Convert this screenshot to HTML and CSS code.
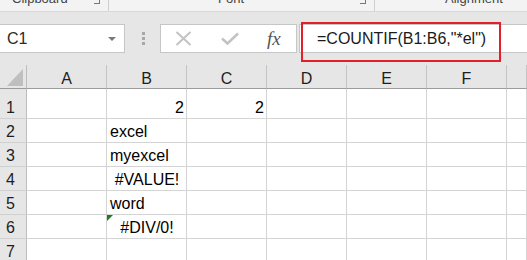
FILE: index.html
```html
<!DOCTYPE html>
<html lang="en">
<head>
    <meta charset="UTF-8">
    <title>COUNTIF</title>
    <link rel="stylesheet" href="styles.css">
</head>
<body>

    <!-- ribbon group labels, cut off at the top -->
    <div class="ribbon">
        <div class="group group-clip">
            <span class="label">Clipboard</span>
            <span class="launcher"></span>
        </div>
        <div class="group group-font">
            <span class="label">Font</span>
            <span class="launcher"></span>
        </div>
        <div class="group group-align">
            <span class="label">Alignment</span>
        </div>
    </div>

    <div class="formula-area">
        <div class="name-box">
            <span>C1</span>
            <span class="drop"></span>
        </div>
        <div class="dots"><i></i><i></i><i></i></div>
        <div class="buttons">
            <svg width="17" height="15" viewBox="0 0 17 15">
                <path d="M1.5 1 L15.5 14 M15.5 1 L1.5 14" stroke="#c3c3c3" stroke-width="2" fill="none"/>
            </svg>
            <svg width="18" height="13" viewBox="0 0 18 13">
                <path d="M1 6.5 L6.5 11.5 L17 1.5" stroke="#c3c3c3" stroke-width="2.6" fill="none"/>
            </svg>
            <span class="fx">fx</span>
        </div>
        <div class="formula">=COUNTIF(B1:B6,"*el")</div>
        <div class="highlight"></div>
    </div>

    <div class="sheet">
        <div class="corner"><span class="tri"></span></div>
        <div class="col-head">A</div>
        <div class="col-head">B</div>
        <div class="col-head">C</div>
        <div class="col-head">D</div>
        <div class="col-head">E</div>
        <div class="col-head">F</div>
        <div class="col-head"></div>

        <div class="row-head">1</div>
        <div class="cell"></div>
        <div class="cell num">2</div>
        <div class="cell num">2</div>
        <div class="cell"></div><div class="cell"></div><div class="cell"></div><div class="cell"></div>

        <div class="row-head">2</div>
        <div class="cell"></div>
        <div class="cell">excel</div>
        <div class="cell"></div><div class="cell"></div><div class="cell"></div><div class="cell"></div><div class="cell"></div>

        <div class="row-head">3</div>
        <div class="cell"></div>
        <div class="cell">myexcel</div>
        <div class="cell"></div><div class="cell"></div><div class="cell"></div><div class="cell"></div><div class="cell"></div>

        <div class="row-head">4</div>
        <div class="cell"></div>
        <div class="cell err">#VALUE!</div>
        <div class="cell"></div><div class="cell"></div><div class="cell"></div><div class="cell"></div><div class="cell"></div>

        <div class="row-head">5</div>
        <div class="cell"></div>
        <div class="cell">word</div>
        <div class="cell"></div><div class="cell"></div><div class="cell"></div><div class="cell"></div><div class="cell"></div>

        <div class="row-head">6</div>
        <div class="cell"></div>
        <div class="cell err flagged">#DIV/0!</div>
        <div class="cell"></div><div class="cell"></div><div class="cell"></div><div class="cell"></div><div class="cell"></div>

        <div class="row-head">7</div>
        <div class="cell"></div><div class="cell"></div><div class="cell"></div><div class="cell"></div><div class="cell"></div><div class="cell"></div><div class="cell"></div>
    </div>

</body>
</html>
```

FILE: styles.css
```css
body {
    margin: 0;
    width: 527px;
    height: 260px;
    overflow: hidden;
    background: #fff;
    font-family: 'Liberation Sans', Arial, sans-serif;
    color: #000;
}

/* ribbon */
.ribbon {
    display: flex;
    height: 11px;
    background: #f3f3f3;
    border-bottom: 1px solid #d8d8d8;
    overflow: hidden;
}

.group {
    position: relative;
    box-sizing: border-box;
    height: 11px;
    border-right: 1px solid #cfcfcf;
}

.group-clip {
    width: 109px;
    padding-left: 12px;
}

.group-font {
    width: 266px;
    padding-left: 109px;
}

.group-align {
    flex: 1;
    padding-left: 70px;
    border-right: none;
}

.label {
    display: block;
    font-size: 13px;
    line-height: 15px;
    margin-top: -9px;
    color: #444;
    white-space: nowrap;
}

.launcher {
    position: absolute;
    right: 8px;
    top: -2px;
    width: 5px;
    height: 5px;
    border-right: 1px solid #777;
    border-bottom: 1px solid #777;
}

/* formula bar */
.formula-area {
    position: relative;
    display: flex;
    align-items: center;
    height: 53px;
    background: #e6e6e6;
}

.name-box {
    display: flex;
    align-items: center;
    justify-content: space-between;
    box-sizing: border-box;
    width: 126px;
    height: 29px;
    margin-left: -1px;
    padding: 0 8px 0 7px;
    background: #fff;
    border: 1px solid #c6c6c6;
    font-size: 16px;
    color: #2b2b2b;
}

.drop {
    width: 0;
    height: 0;
    border-left: 4px solid transparent;
    border-right: 4px solid transparent;
    border-top: 4px solid #7a7a7a;
}

.dots {
    display: flex;
    flex-direction: column;
    gap: 2px;
    margin: 0 15px 0 17px;
}

.dots i {
    width: 3px;
    height: 3px;
    background: #a8a8a8;
}

.buttons {
    display: flex;
    align-items: center;
    box-sizing: border-box;
    width: 137px;
    height: 29px;
    padding-left: 14px;
    background: #fff;
    border: 1px solid #c6c6c6;
}

.buttons svg + svg {
    margin-left: 29px;
}

.fx {
    margin-left: 28px;
    font-family: 'Liberation Serif', serif;
    font-style: italic;
    font-size: 19px;
    color: #555;
}

.formula {
    flex: 1;
    box-sizing: border-box;
    height: 29px;
    margin-left: 2px;
    padding-left: 17px;
    line-height: 27px;
    background: #fff;
    border: 1px solid #c6c6c6;
    border-right: none;
    font-size: 16px;
    color: #1a1a1a;
    white-space: nowrap;
}

/* red annotation frame */
.highlight {
    position: absolute;
    left: 301px;
    top: 10px;
    width: 196px;
    height: 36px;
    border: 2px solid #e3202a;
}

/* grid */
.sheet {
    display: grid;
    grid-template-columns: 27px repeat(6, 80px) 1fr;
    grid-template-rows: 24px 30px repeat(6, 24px);
    font-size: 16px;
    line-height: 18px;
}

.corner,
.col-head,
.row-head,
.cell {
    box-sizing: border-box;
    display: flex;
    align-items: flex-end;
}

.corner {
    position: relative;
    background: #e6e6e6;
    border-right: 1px solid #bdbdbd;
    border-bottom: 1px solid #9c9c9c;
}

.tri {
    position: absolute;
    left: 7px;
    bottom: 2px;
    width: 0;
    height: 0;
    border-left: 16px solid transparent;
    border-bottom: 17px solid #bfbfbf;
}

.col-head {
    justify-content: center;
    background: #e6e6e6;
    border-right: 1px solid #c4c4c4;
    border-bottom: 1px solid #9c9c9c;
    color: #1e1e1e;
}

.row-head {
    padding: 0 0 1px 6px;
    background: #e6e6e6;
    border-right: 1px solid #bdbdbd;
    border-bottom: 1px solid #d0d0d0;
    color: #1e1e1e;
}

.cell {
    position: relative;
    padding: 0 2px 1px 3px;
    border-right: 1px solid #d4d4d4;
    border-bottom: 1px solid #d4d4d4;
    white-space: nowrap;
}

.num {
    justify-content: flex-end;
}

.err {
    justify-content: center;
}

.flagged::before {
    content: '';
    position: absolute;
    left: 0;
    top: 0;
    border-top: 6px solid #1e7b1e;
    border-right: 6px solid transparent;
}
```
